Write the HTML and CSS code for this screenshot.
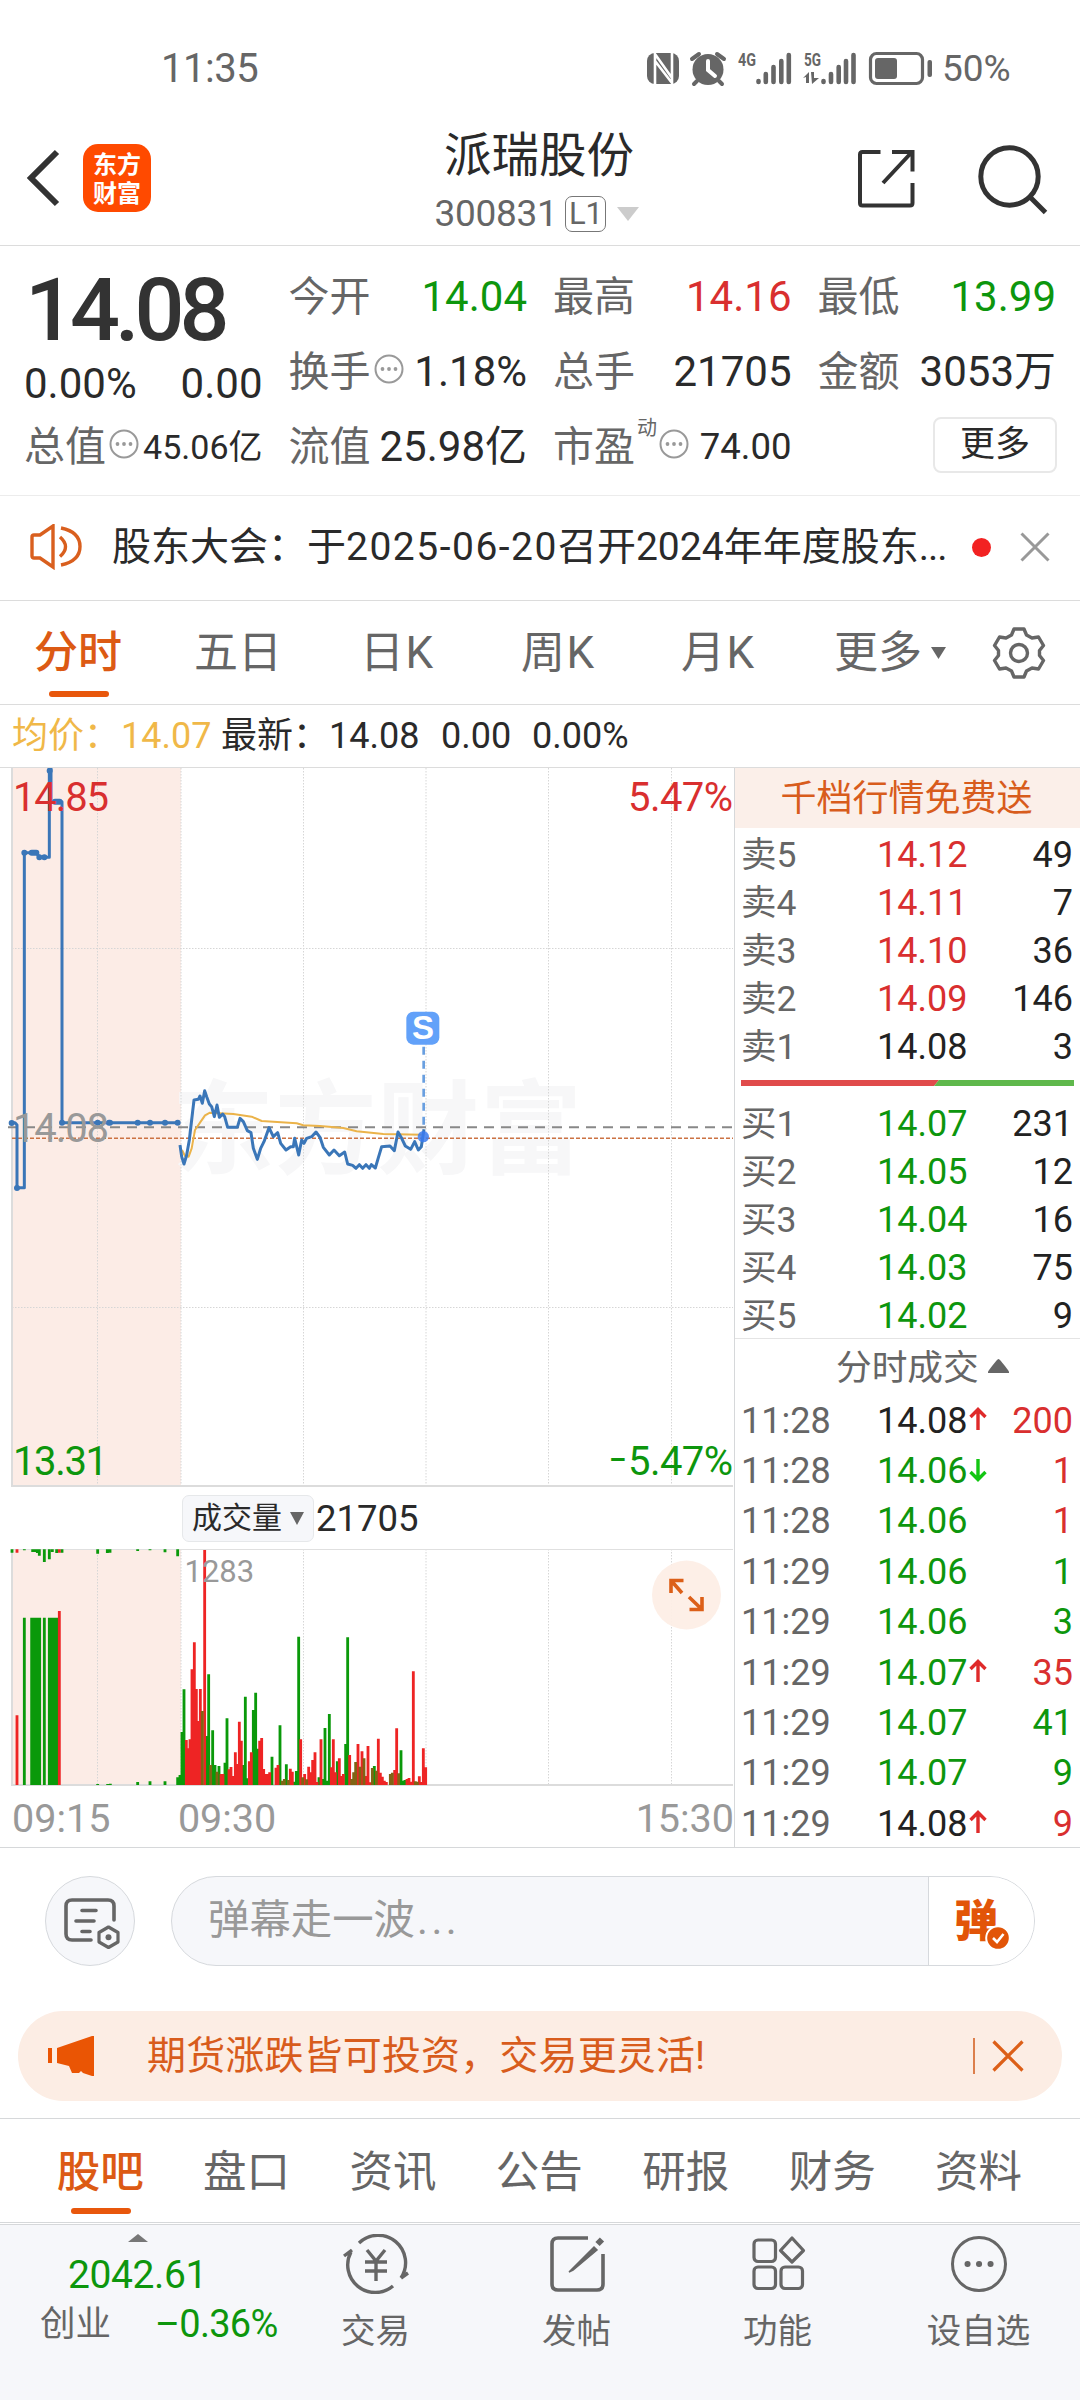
FILE: index.html
```html
<!DOCTYPE html>
<html lang="zh-CN">
<head>
<meta charset="utf-8">
<title>派瑞股份 300831</title>
<link rel="stylesheet" href="styles.css">
</head>
<body>
<div class="status">
  <span class="clock">11:35</span>
  <svg class="status-icons" width="290" height="40" viewBox="0 0 290 40" fill="#666">
    <rect x="2" y="5" width="32" height="31" rx="8"/>
    <path d="M10 36V6L27 30V13M27 5V35L10 13" fill="none" stroke="#fff" stroke-width="2.6"/>
    <circle cx="63" cy="21.500" r="15.500"/>
    <path d="M47 11l7-5M79 11l-7-5M52 33l-3 3M74 33l3 3" stroke="#666" stroke-width="4" stroke-linecap="round"/>
    <path d="M63 13v9l7 6" fill="none" stroke="#fff" stroke-width="4" stroke-linecap="round"/>
    <text x="93" y="17.500" class="net" textLength="18" lengthAdjust="spacingAndGlyphs">4G</text>
    <path d="M113.500 33v1M120.800 26v8M128.500 19v15M136.300 13v21M143.800 7v27M178.500 33v1M186 26v8M193.700 19v15M201 13v21M208.500 7v27" stroke="#666" stroke-width="4.600" stroke-linecap="round"/>
    <text x="159" y="17.500" class="net" textLength="17" lengthAdjust="spacingAndGlyphs">5G</text>
    <path d="M158 30l6-6v11h-3v-6zM166 24h3v6h5l-7 6z"/>
    <rect x="225.500" y="5.500" width="52" height="30" rx="6" fill="none" stroke="#666" stroke-width="3.200"/>
    <rect x="230" y="10" width="22" height="21" rx="3"/>
    <rect x="282.500" y="12" width="4.500" height="17" rx="2"/>
  </svg>
  <span class="batt">50%</span>
</div>

<header class="header">
  <svg class="back" width="36" height="60" viewBox="0 0 36 60" fill="none" stroke="#333" stroke-width="6"><path d="M32 4L6 30l26 26"/></svg>
  <div class="logo"><span>东方</span><span>财富</span></div>
  <div class="name">
    <h1>派瑞股份</h1>
    <div class="code"><span>300831</span><b>L1</b><svg width="22" height="14" viewBox="0 0 22 14"><path d="M0 0h22L11 14z" fill="#ccc"/></svg></div>
  </div>
  <svg class="share" width="60" height="60" viewBox="0 0 60 60" fill="none" stroke="#333" stroke-width="4"><path d="M24.500 4H6.500Q4 4 4 6.500V55Q4 57.500 6.500 57.500H54Q56.500 57.500 56.500 55V35M36 4H56.500V23.500M55 5L27 35"/></svg>
  <svg class="search" width="72" height="72" viewBox="0 0 72 72" fill="none" stroke="#333" stroke-width="5"><circle cx="33.500" cy="33.500" r="28.700"/><path d="M54 54l15.500 15.500"/></svg>
</header>

<section class="stats">
  <div class="col">
    <div class="big">14.08</div>
    <div class="cell mid"><span class="v">0.00%</span><span class="v">0.00</span></div>
    <div class="cell"><span class="l">总值</span><svg class="more-dot" viewBox="0 0 30 30"><use href="#dots"/></svg><span class="v s34">45.06亿</span></div>
  </div>
  <div class="col">
    <div class="cell"><span class="l">今开</span><span class="v green">14.04</span></div>
    <div class="cell"><span class="l">换手</span><svg class="more-dot" viewBox="0 0 30 30"><use href="#dots"/></svg><span class="v">1.18%</span></div>
    <div class="cell"><span class="l">流值</span><span class="v">25.98亿</span></div>
  </div>
  <div class="col">
    <div class="cell"><span class="l">最高</span><span class="v red">14.16</span></div>
    <div class="cell"><span class="l">总手</span><span class="v">21705</span></div>
    <div class="cell"><span class="l">市盈</span><sup>动</sup><svg class="more-dot tight" viewBox="0 0 30 30"><use href="#dots"/></svg><span class="v s36">74.00</span></div>
  </div>
  <div class="col">
    <div class="cell"><span class="l">最低</span><span class="v green">13.99</span></div>
    <div class="cell"><span class="l">金额</span><span class="v">3053万</span></div>
    <div class="cell"><button class="more">更多</button></div>
  </div>
  <svg width="0" height="0" class="defs"><defs><g id="dots"><circle cx="15" cy="15" r="13.500" fill="none" stroke="#999" stroke-width="2"/><g fill="#999"><circle cx="8.500" cy="15" r="1.900"/><circle cx="15" cy="15" r="1.900"/><circle cx="21.500" cy="15" r="1.900"/></g></g></defs></svg>
</section>

<section class="news">
  <svg width="52" height="46" viewBox="0 0 52 46" fill="none" stroke="#d95f1e" stroke-width="3.400"><path d="M2 13Q2 11 4 11H10L23 2V43L10 34H4Q2 34 2 32ZM30 13Q41 22.500 30 32.500M31 4Q50 8 50 22.500T31 41"/></svg>
  <p>股东大会：于<span class="date">2025-06-20</span>召开<span class="yr">2024</span>年年度股东<span class="el">...</span></p>
  <i class="reddot"></i>
  <svg class="close" width="30" height="30" viewBox="0 0 30 30" stroke="#999" stroke-width="3"><path d="M1.500 1.500l27 27M28.500 1.500l-27 27"/></svg>
</section>

<nav class="periods">
  <span class="on">分时</span><span>五日</span><span>日K</span><span>周K</span><span>月K</span>
  <span class="drop">更多<svg width="15" height="12" viewBox="0 0 15 12"><path d="M0 0h15L7.500 12z" fill="#666"/></svg></span>
  <svg class="gear" width="54" height="54" viewBox="-27 -27 54 54" fill="none" stroke="#666" stroke-width="3.400" stroke-linejoin="round"><path d="M-5 -24H5L7.500 -18L13 -15L19.500 -16L24.500 -7.500L20.500 -2.500V2.500L24.500 7.500L19.500 16L13 15L7.500 18L5 24H-5L-7.500 18L-13 15L-19.500 16L-24.500 7.500L-20.500 2.500V-2.500L-24.500 -7.500L-19.500 -16L-13 -15L-7.500 -18Z"/><circle r="8.500"/></svg>
</nav>

<div class="info">
  <span class="avg">均价：</span><span class="avg n1">14.07</span><span>最新：</span><span class="n2">14.08</span><span class="n3">0.00</span><span class="n4">0.00%</span>
</div>

<main class="market">
  <section class="charts">
    <svg class="price" width="734" height="719" viewBox="0 0 734 719">
      <rect x="12" width="169" height="718" fill="#fcece6"/>
      <text class="mark" x="172" y="398" textLength="410">东方财富</text>
      <g stroke="#d6d6d6" stroke-dasharray="1.500 1.500"><path d="M97.500 0V718M181 0V718M303.500 0V718M426 0V718M548.500 0V718M671.500 0V718M12 180.500H733M12 539.500H733"/></g>
      <path d="M12 0V718H733" fill="none" stroke="#dcdcdc" stroke-width="2"/>
      <path d="M8 359.300H733" stroke="#888" stroke-width="2" stroke-dasharray="10 7"/>
      <path d="M12 370.300H733" stroke="#cc7243" stroke-width="1.500" stroke-dasharray="4 2"/>
      <g transform="scale(.33333) translate(0 -24)" fill="none" stroke-linejoin="round">
        <path stroke="#ebb34a" stroke-width="6" d="M546 1170L555 1188L566 1190L575 1165L585 1110L600 1088L615 1066L630 1058L700 1062L755 1070L785 1083L890 1090L910 1096L960 1098L1030 1104L1070 1114L1150 1122L1265 1124"/>
        <g stroke="#3a76b8" stroke-width="9">
          <path d="M35 1088H45L51 1095V1283H73V278H110L118 292H148V26H153V125H186V1088H538"/>
          <path d="M540 1155L545 1190L552 1212L560 1185L568 1140L575 1080L582 1020L595 1018L600 1008L607 1030L614 992L620 1010L628 1032L635 1040L643 1070L651 1035L658 1072L668 1062L674 1070L683 1102H712L720 1075L730 1085L742 1112L753 1118L760 1165L772 1198L782 1165L792 1145L807 1103L820 1130L833 1118L842 1150L858 1170L872 1160H880L884 1135L896 1185L905 1140L912 1150L920 1135L935 1130L948 1116L960 1132L970 1162L988 1185L1002 1170L1018 1187L1034 1176L1043 1212L1058 1216L1068 1225L1078 1214L1088 1225L1098 1214L1108 1225L1114 1214L1126 1224L1136 1190L1145 1160L1170 1158L1183 1172L1194 1116L1205 1135L1216 1158L1232 1168L1244 1145L1255 1170L1264 1160L1272 1108"/>
        </g>
        <path stroke="#3a76b8" stroke-width="18" stroke-linecap="round" d="M35 1089h.1M51 1284h.1M73 278h.1M95 278h14M118 292h.1M133 292h.1M149 32h.1M165 125h14M186 1088h.1M293 1088h.1M327 1088h3M413 1088h.1M450 1088h.1M495 1088h.1M533 1088h.1"/>
        <path stroke="#699fe0" stroke-width="8" stroke-dasharray="24 18" d="M1271 860V1110"/>
        <circle cx="1270" cy="1130" r="17" fill="#3b7bef" fill-opacity=".85"/>
        <rect x="1219" y="755" width="99" height="99" rx="21" fill="#62a1f9"/>
      </g>
      <text class="s" x="423" y="271" text-anchor="middle">S</text>
      <text class="ax red" x="13" y="42.500" textLength="96">14.85</text>
      <text class="ax red" x="733" y="42.500" text-anchor="end" textLength="105">5.47%</text>
      <text class="ax gray" x="13" y="374" textLength="96">14.08</text>
      <text class="ax green" x="13" y="707" textLength="95">13.31</text>
      <text class="ax green" x="733" y="707" text-anchor="end" textLength="105">5.47%</text>
      <text class="ax green" x="609" y="706" textLength="18" lengthAdjust="spacingAndGlyphs">–</text>
    </svg>
    <div class="vol-head"><span class="pill">成交量<svg width="14" height="13" viewBox="0 0 14 13"><path d="M0 0h14L7 13z" fill="#666"/></svg></span><span>21705</span></div>
    <svg class="vol" width="734" height="238" viewBox="0 0 734 238">
      <rect x="12" width="169" height="236" fill="#fcece6"/>
      <path d="M97.500 0V236M181 0V236M303.500 0V236M426 0V236M548.500 0V236M671.500 0V236" stroke="#d6d6d6" stroke-dasharray="1.500 1.500"/>
      <path d="M12 .5H733" stroke="#e0e0e0"/>
      <path d="M12 0V236H733" fill="none" stroke="#dcdcdc" stroke-width="2"/>
      <g transform="scale(.33333) translate(0 -27)" stroke-width="8.500">
        <path stroke="#0a990a" d="M36 28V38M73 28V31M98 28V36M105 28V36M112 28V39M118 28V47M133 28V66M148 28V58M157 28V36M170 28V39M186 28V38M293 28V41M322 28V39M330 28V38M413 28V33M450 28V31M495 28V37M533 28V49M73 735V233M95 735V233M103 735V233M111 735V233M119 735V233M133 735V233M148 735V233M156 735V233M164 735V233M171 735V233M293 735V732M323 735V732M331 735V731M413 735V726M450 735V724M495 735V724M533 735V712M540 735V705M546 735V576M552 735V448M620 735V588M626 735V403M638 735V571M645 735V675M657 735V678M675 735V668M681 735V535M730 735V675M736 735V470M742 735V715M760 735V510M767 735V458M773 735V626M816 735V650M840 735V556M859 735V673M883 735V725M889 735V693M896 735V290M957 735V712M969 735V717M975 735V564M982 735V722M988 735V522M1012 735V664M1037 735V612M1043 735V292M1123 735V678M1203 735V631M1209 735V722M1215 735V720"/>
        <path stroke="#ee2424" d="M51 28V38M178 28V38M51 735V526M178 735V213M559 735V600M564 735V625M570 735V598M576 735V388M583 735V307M589 735V447M595 735V543M601 735V447M614 735V30M663 735V702M669 735V702M687 735V688M693 735V681M699 735V708M706 735V637M712 735V672M718 735V545M724 735V602M748 735V664M754 735V637M779 735V602M785 735V594M791 735V687M797 735V702M803 735V702M809 735V697M828 735V683M834 735V675M871 735V686M877 735V695M902 735V598M914 735V702M926 735V680M932 735V697M938 735V660M945 735V637M951 735V726M963 735V598M994 735V682M1000 735V598M1006 735V697M1018 735V655M1024 735V708M1030 735V702M1049 735V645M1074 735V612M1086 735V634M1098 735V708M1104 735V618M1110 735V727M1135 735V596M1141 735V698M1147 735V710M1153 735V722M1159 735V726M1184 735V690M1190 735V565M1221 735V717M1227 735V714M1233 735V725M1240 735V394M1258 735V709M1264 735V726M1270 735V625M1277 735V682"/>
        <path stroke="#806414" d="M607 735V513M632 735V675M651 735V695M847 735V722M853 735V717M865 735V720M908 735V712M920 735V718M1055 735V717M1061 735V697M1067 735V666M1080 735V680M1092 735V655M1117 735V684M1129 735V692M1171 735V702M1177 735V698M1196 735V700M1246 735V724M1252 735V725"/>
      </g>
      <text class="vmax" x="184.500" y="33">1283</text>
      <circle cx="686.500" cy="46" r="34.500" fill="#fdeee6" fill-opacity=".95"/>
      <path d="M671 44V31.500H683.500M671.500 32L682 44M702 48V60.500H689.500M701.500 60L689 48" fill="none" stroke="#dc5f18" stroke-width="3.600"/>
    </svg>
    <div class="times"><span>09:15</span><span class="t2">09:30</span><span class="t3">15:30</span></div>
  </section>

  <aside class="book">
    <div class="promo">千档行情免费送</div>
    <div class="levels">
      <div><span>卖5</span><b class="red">14.12</b><em>49</em></div>
      <div><span>卖4</span><b class="red">14.11</b><em>7</em></div>
      <div><span>卖3</span><b class="red">14.10</b><em>36</em></div>
      <div><span>卖2</span><b class="red">14.09</b><em>146</em></div>
      <div><span>卖1</span><b>14.08</b><em>3</em></div>
    </div>
    <svg class="ratio" width="333" height="6" viewBox="0 0 333 6"><path d="M0 0H198L193 6H0z" fill="#e04b4b"/><path d="M198 0H333V6H193z" fill="#5fb84c"/></svg>
    <div class="levels">
      <div><span>买1</span><b class="green">14.07</b><em>231</em></div>
      <div><span>买2</span><b class="green">14.05</b><em>12</em></div>
      <div><span>买3</span><b class="green">14.04</b><em>16</em></div>
      <div><span>买4</span><b class="green">14.03</b><em>75</em></div>
      <div><span>买5</span><b class="green">14.02</b><em>9</em></div>
    </div>
    <div class="deal-head">分时成交<svg width="21" height="14" viewBox="0 0 21 14"><path d="M10.500 0Q12 0 21 12.500V14H0V12.500Q9 0 10.500 0z" fill="#666"/></svg></div>
    <div class="deals">
      <div><span>11:28</span><b>14.08</b><svg class="up" viewBox="0 0 18 24"><path d="M9 23V3M1.500 10L9 2.500L16.500 10"/></svg><em class="red">200</em></div>
      <div><span>11:28</span><b class="green">14.06</b><svg class="down" viewBox="0 0 18 24"><path d="M9 1V21M1.500 14L9 21.500L16.500 14"/></svg><em class="red">1</em></div>
      <div><span>11:28</span><b class="green">14.06</b><em class="red">1</em></div>
      <div><span>11:29</span><b class="green">14.06</b><em class="green">1</em></div>
      <div><span>11:29</span><b class="green">14.06</b><em class="green">3</em></div>
      <div><span>11:29</span><b class="green">14.07</b><svg class="up" viewBox="0 0 18 24"><path d="M9 23V3M1.500 10L9 2.500L16.500 10"/></svg><em class="red">35</em></div>
      <div><span>11:29</span><b class="green">14.07</b><em class="green">41</em></div>
      <div><span>11:29</span><b class="green">14.07</b><em class="green">9</em></div>
      <div><span>11:29</span><b>14.08</b><svg class="up" viewBox="0 0 18 24"><path d="M9 23V3M1.500 10L9 2.500L16.500 10"/></svg><em class="red">9</em></div>
    </div>
  </aside>
</main>

<section class="comment">
  <div class="round"><svg width="58" height="54" viewBox="0 0 58 54" fill="none" stroke="#666" stroke-width="3.600"><path d="M28 44H9Q3 44 3 38V10Q3 4 9 4H45Q51 4 51 10V24M19 14.500H33M13 25H31M19 35.500H27" stroke-linecap="round"/><path d="M45.500 31L55 36.500V46L45.500 51.500L36 46V36.500Z" stroke-width="3.200" stroke-linejoin="round"/><circle cx="45.500" cy="41.200" r="3" fill="#666" stroke="none"/></svg></div>
  <div class="field"><span>弹幕走一波<i>...</i></span><div class="dan">弹<svg width="26" height="26" viewBox="0 0 26 26"><circle cx="13" cy="13" r="11.800" fill="#e25508" stroke="#fff" stroke-width="2"/><path d="M8 13l4 4 6.500-8" fill="none" stroke="#fff" stroke-width="2.600"/></svg></div></div>
</section>

<section class="banner">
  <svg width="46" height="40" viewBox="0 0 46 40" fill="#ea5504"><path d="M0 12h4v15H0zM9 12L44 0h2v40h-2l-9-3-2-2-2 2h-7l-3-7-12-3z"/></svg>
  <p>期货涨跌皆可投资，交易更灵活!</p>
  <i></i>
  <svg width="32" height="32" viewBox="0 0 32 32" stroke="#dc5f18" stroke-width="3.200"><path d="M1.500 1.500l29 29M30.500 1.500l-29 29"/></svg>
</section>

<nav class="tabs"><span class="on">股吧</span><span>盘口</span><span>资讯</span><span>公告</span><span>研报</span><span>财务</span><span>资料</span></nav>

<footer class="bottom">
  <div class="index">
    <svg width="20" height="8" viewBox="0 0 20 8"><path d="M10 0L20 8H0z" fill="#777"/></svg>
    <strong>2042.61</strong>
    <div><span>创业</span><b>–0.36%</b></div>
  </div>
  <div class="item"><svg width="66" height="60" viewBox="-33 -30 66 60" fill="none" stroke="#666" stroke-width="3.400"><path d="M-17 -21A27.500 27.500 0 0 1 25 14M17 22A27.500 27.500 0 0 1 -25 -12M-32 -8L-24 -14M25 14L32 9M-9 -14L0 -3L9 -14M-11 -2H11M-11 7H11M0 -3V17"/></svg>交易</div>
  <div class="item"><svg width="60" height="60" viewBox="-30 -30 60 60" fill="none" stroke="#666" stroke-width="3.600"><path d="M11 -26H-19Q-25 -26 -25 -20V20Q-25 26 -19 26H20Q26 26 26 20V-10"/><path d="M-8 8L17 -17L20 -14L-4 6Z" fill="#666" stroke-width="1.500"/><path d="M20.500 -20L25 -24.500" stroke-width="6"/></svg>发帖</div>
  <div class="item"><svg width="60" height="60" viewBox="-30 -30 60 60" fill="none" stroke="#666" stroke-width="3.200"><rect x="-24" y="-24" width="21.500" height="21.500" rx="4"/><rect x="-24" y="3" width="21.500" height="21.500" rx="4"/><rect x="3" y="3" width="21.500" height="21.500" rx="4"/><path d="M14 -26L25.500 -13.500L14 -2L2.500 -13.500Z" stroke-linejoin="round"/></svg>功能</div>
  <div class="item"><svg width="60" height="60" viewBox="-30 -30 60 60" fill="none" stroke="#666" stroke-width="3"><circle r="26.500"/><path d="M-11.500 0h.1M0 0h.1M11.500 0h.1" stroke-width="6" stroke-linecap="round"/></svg>设自选</div>
</footer>
</body>
</html>
```
FILE: styles.css
```css
* { box-sizing: border-box; margin: 0; padding: 0; }
body {
  width: 1080px; height: 2400px; overflow: hidden;
  background: #fff; color: #2a2a2a;
  font-family: Roboto, "Noto Sans CJK SC", sans-serif;
  display: flex; flex-direction: column; white-space: nowrap;
}
body > * { flex: none; }
svg { display: block; flex: none; }
b, em, i, h1 { font-weight: 400; font-style: normal; }
.red { color: #d92f2f; fill: #d92f2f; }
.green { color: #0d960d; fill: #0d960d; }
.gray { fill: #999; }

.status { height: 90px; padding: 48px 0 0 161px; display: flex; align-items: center; color: #666; line-height: 42px; }
.clock { font-size: 40px; width: 484px; letter-spacing: -.5px; }
.status-icons { margin-top: -2px; }
.net { font: 700 19px Roboto, sans-serif; }
.batt { font-size: 37px; margin-left: 7px; }

.header { height: 156px; border-bottom: 1px solid #dcdcdc; display: flex; align-items: center; padding-left: 25px; }
.back { margin-top: 20px; }
.logo {
  width: 68px; height: 68px; margin: 20px 0 0 22px; border-radius: 15px; background: #ff4a00; color: #fff;
  display: flex; flex-direction: column; align-items: center; justify-content: center; gap: 1px;
  font-size: 24px; line-height: 28px; font-weight: 700; font-family: "Noto Sans CJK SC", sans-serif;
}
.name { width: 706px; margin-left: 35px; display: flex; flex-direction: column; align-items: center; padding-top: 26px; }
.name h1 { font-size: 47.500px; line-height: 66px; }
.code { display: flex; align-items: center; color: #666; font-size: 37px; line-height: 50px; margin-left: -4px; }
.code span { letter-spacing: -.3px; }
.code b { border: 1.500px solid #777; border-radius: 7px; width: 41px; height: 36px; line-height: 34px; font-size: 31px; text-align: center; margin: 0 11px 0 8px; }
.share { margin: 20px 0 0 -36px; }
.search { margin: 22px 0 0 60px; }

.stats { height: 250px; border-bottom: 1px solid #ececec; padding: 13px 0 0 24px; display: flex; gap: 26px; }
.defs { position: absolute; }
.col { width: 238.500px; display: flex; flex-direction: column; }
.cell { height: 75px; display: flex; align-items: center; line-height: 60px; }
.cell.mid { height: 51px; }
.big { height: 99px; line-height: 101px; font-size: 88px; font-weight: 500; letter-spacing: -5px; color: #333; padding-left: 1px; }
.cell .l { font-size: 41px; color: #666; }
.cell .v { font-size: 42px; margin-left: auto; }
.cell.mid .v:first-child { margin-left: 0; }
.cell .v.s34 { font-size: 34px; }
.cell .v.s36 { font-size: 36.500px; }
.more-dot { width: 30px; height: 30px; margin: -5px 0 0 3px; }
.more-dot.tight { margin-left: 2px; }
.cell sup { font-size: 20px; line-height: 20px; color: #666; margin: -38px 0 0 2px; }
.more { margin: -3px -1px 0 auto; width: 124px; height: 56px; border: 2px solid #e8e8e8; border-radius: 8px; background: #fff; font: 400 35px/50px Roboto, "Noto Sans CJK SC", sans-serif; color: #2a2a2a; }

.news { height: 105px; border-bottom: 1px solid #dcdcdc; display: flex; align-items: center; padding: 0 30px 2px 30px; }
.news p { font-size: 39px; margin-left: 30px; line-height: 60px; width: 860px; flex: none; }
.date { letter-spacing: 1.500px; }
.el { letter-spacing: -1px; }
.reddot { width: 19px; height: 19px; border-radius: 50%; background: #f22222; flex: none; margin-right: auto; }

.periods { height: 104px; border-bottom: 1px solid #dcdcdc; display: flex; align-items: center; padding: 1px 34px 0; font-size: 44px; line-height: 102px; color: #666; }
.periods span { width: 160px; position: relative; }
.periods .on { color: #dc5a14; font-weight: 500; }
.periods .on::after { content: ""; position: absolute; left: 15px; bottom: 7px; width: 60px; height: 6px; border-radius: 3px; background: #e8570c; }
.periods span:nth-child(3) { padding-left: 6px; width: 167px; }
.periods span:nth-child(3), .periods span:nth-child(4), .periods span:nth-child(5) { letter-spacing: 1.500px; }
.periods span:nth-child(4), .periods span:nth-child(5) { width: 160px; }
.periods .drop { display: flex; align-items: center; gap: 9px; width: 158px; margin-left: -7px; }

.info { height: 63px; border-bottom: 1px solid #dcdcdc; display: flex; align-items: center; padding: 0 0 1px 12px; font-size: 36px; line-height: 60px; }
.info .avg { color: #f0b848; }
.info .n1 { width: 100px; margin-left: 1px; }
.info .n2 { width: 112px; }
.info .n3 { width: 91px; }

.market { height: 1080px; display: flex; border-bottom: 1px solid #d6d8da; }
.charts { width: 734px; }
.mark { font: 700 102px "Noto Sans CJK SC", sans-serif; fill: #f7f7f8; }
.s { font: 700 33px "Liberation Sans", sans-serif; fill: #fff; }
.ax { font-size: 40px; }
.vol-head { height: 62px; display: flex; align-items: center; padding-left: 182px; font-size: 36.500px; gap: 2px; }
.pill { width: 132px; height: 47px; border: 1.500px solid #e6e8ea; border-radius: 7px; background: #f6f7fa; display: flex; align-items: center; justify-content: center; gap: 8px; font-size: 30px; line-height: 42px; }
.vmax { font-size: 31px; fill: #999; }
.times { height: 60px; display: flex; line-height: 63px; font-size: 39.500px; color: #999; padding-left: 12px; }
.times .t2 { margin-left: 67.500px; }
.times .t3 { margin-left: auto; }

.book { width: 346px; border-left: 1.500px solid #d6d8da; }
.promo { height: 60px; line-height: 62px; background: #fbefe9; color: #d85c1c; font-size: 36px; text-align: center; padding-right: 2px; }
.levels { padding-top: 3px; }
.levels div, .deals div { display: flex; align-items: center; padding: 0 7px 0 6px; font-size: 36px; color: #222; height: 48px; line-height: 48px; }
.levels span, .deals span { color: #666; width: 136px; }
.levels span { font-size: 35.500px; }
.book b.red, .book em.red { color: #d92f2f; }
.book b.green, .book em.green { color: #0d960d; }
.book em { margin-left: auto; }
.ratio { margin: 9px 0 11px 6px; }
.ratio + .levels { padding: 3px 0 0; height: 241px; }
.deal-head { border-top: 1px solid #e4e4e4; height: 58px; line-height: 58px; display: flex; align-items: center; gap: 9px; font-size: 35.700px; color: #666; padding-left: 101px; }
.deal-head svg { margin-top: -3px; }
.deals div { height: 50.400px; line-height: 51px; }
.deals svg { width: 18px; height: 24px; margin-left: 2px; margin-top: -4px; fill: none; stroke: #df2a2a; stroke-width: 3.400; }
.deals .down { stroke: #12c612; }

.comment { height: 163px; padding: 28px 0 0 45px; display: flex; gap: 36px; }
.round { width: 90px; height: 90px; border: 1.500px solid #d6d9dd; border-radius: 50%; background: #f6f7fa; display: flex; align-items: center; justify-content: center; padding-left: 3px; padding-top: 3px; }
.field { width: 864px; height: 90px; border: 1.500px solid #d6d9dd; border-radius: 45px; background: #f6f7fa; overflow: hidden; display: flex; }
.field span { flex: 1; padding-left: 36px; font-size: 41.400px; line-height: 86px; color: #999; }
.field i { letter-spacing: 3.500px; margin-left: 2px; }
.dan { position: relative; width: 106px; border-left: 1.500px solid #d6d9dd; background: #fff; color: #e25508; font: 900 44px/82px "Noto Sans CJK SC", sans-serif; padding-left: 25px; }
.dan svg { position: absolute; left: 56px; top: 48px; }

.banner { height: 90px; margin: 0 18px; border-radius: 45px; background: #fcede4; display: flex; align-items: center; padding: 0 38px 0 30px; color: #d85c1c; }
.banner p { font-size: 39px; letter-spacing: .15px; line-height: 86px; margin-left: 53px; flex: 1; }
.banner i { width: 2px; height: 36px; background: #dc7f4c; margin-right: 17px; }

.tabs { margin-top: 17px; height: 105px; border-top: 1px solid #d6d8da; border-bottom: 1.500px solid #d6d8da; display: flex; padding-left: 27px; font-size: 43.500px; color: #666; }
.tabs span { width: 146.400px; text-align: center; line-height: 108px; position: relative; }
.tabs .on { color: #dc5a14; font-weight: 500; }
.tabs .on::after { content: ""; position: absolute; left: 44px; bottom: 8px; width: 60px; height: 6px; border-radius: 3px; background: #e8570c; }

.bottom { margin-top: 1px; height: 176px; border-top: 1px solid #d6d8da; background: #f6f7fa; display: flex; color: #666; }
.index { width: 275px; display: flex; flex-direction: column; align-items: flex-start; padding-top: 9px; color: #0d960d; }
.index svg { margin-left: 128px; }
.index strong { font-weight: 400; font-size: 39px; line-height: 40px; margin: 13px 0 0 68px; letter-spacing: -.4px; }
.index div { display: flex; align-items: center; line-height: 50px; margin-top: 4px; padding-left: 40px; }
.index span { font-size: 35.500px; color: #666; width: 115px; }
.index b { font-size: 38px; letter-spacing: -.7px; }
.item { width: 201px; display: flex; flex-direction: column; align-items: center; font-size: 34.500px; line-height: 50px; padding-top: 9px; gap: 12px; }
```
